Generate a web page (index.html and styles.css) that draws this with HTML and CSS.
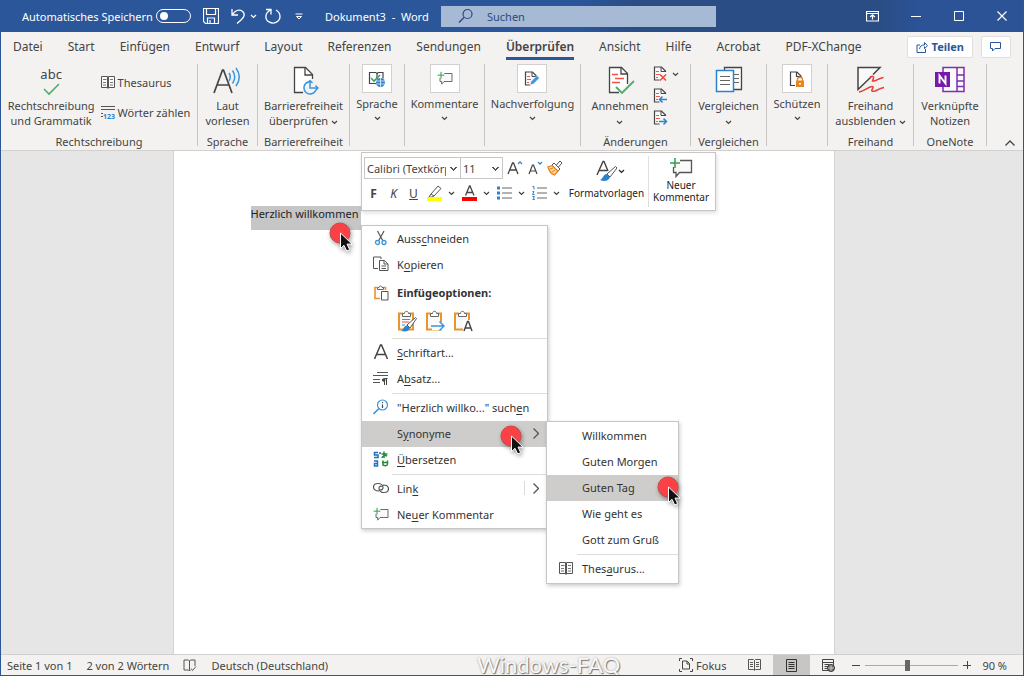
FILE: index.html
```html
<!DOCTYPE html>
<html lang="de">
<head>
<meta charset="utf-8">
<title>Dokument3 - Word</title>
<link rel="stylesheet" href="styles.css">
</head>
<body>
<svg class="defs" aria-hidden="true">
  <symbol id="chev" viewBox="0 0 7 5"><path d="M1 1l2.5 2.5L6 1" fill="none" stroke="currentColor" stroke-width="1.2"/></symbol>
  <symbol id="book" viewBox="0 0 16 16"><path d="M7.500 2.500h-6v11h6zM8.500 2.500h6v11h-6zM7.500 13l.5 1.500.5-1.500" fill="#fafafa" stroke="#555"/><path d="M3 8.500h3M3 11h3M10 5.500h3M10 8.500h3M10 11h3" stroke="#777"/><path d="M3 5.500h3.500" stroke="#e8413c"/></symbol>
  <symbol id="comment" viewBox="0 0 24 22"><path d="M11 3.500h11.500v12h-12l-3.500 4v-4H4.500V10" fill="#fafafa" stroke="#555" stroke-width="1.300"/><path d="M6 1v10M1 6h10" stroke="#2f9e50" stroke-width="1.500"/></symbol>
  <symbol id="pages" viewBox="0 0 14 16"><path d="M12.500 6V5L8.500 1H1.500v13h5" fill="#fafafa" stroke="#444" stroke-width="1.200"/><path d="M8 1v4.500h4.500" fill="none" stroke="#444"/><path d="M3 5.500h3M3 8.500h4M3 11.500h2" stroke="#ee5a4b"/></symbol>
  <symbol id="clip" viewBox="0 0 20 22"><path d="M6 3.500H2v16h14v-16h-4" fill="#fafafa" stroke="#e8952f" stroke-width="2"/><path d="M5.500 6.500v-3h2c0-3 4-3 4 0h2v3z" fill="#fff" stroke="#666"/></symbol>
  <symbol id="pointer" viewBox="0 0 34 34"><circle cx="12" cy="12" r="10" fill="#fb4145" stroke="#c34a4c" stroke-width="1"/><path d="M12.500 12v15.500l3.500-3.200 2.700 5.700 3-1.400-2.700-5.500h5z" fill="#111" stroke="#fff" stroke-width="1"/></symbol>
</svg>

<header class="titlebar">
  <div class="quick">
    <label class="autosave">Automatisches Speichern <input type="checkbox" role="switch" class="toggle"></label>
    <button class="tb" aria-label="Speichern"><svg width="16" height="16" viewBox="0 0 16 16"><path d="M.5.500h15v15H2.500l-2-2zM3.500.500v6h9v-6M4.500 15.500v-5.500h7v5.500M7 12v3" fill="none" stroke="#fff" stroke-width="1.200"/></svg></button>
    <button class="tb undo" aria-label="Rückgängig"><svg width="15" height="16" viewBox="0 0 15 16"><path d="M1 1v6h6M1.500 6.500C4 2.500 8 1 11 3c3.500 2.500 2.500 6-1 9l-4 3.500" fill="none" stroke="#fff" stroke-width="1.300"/></svg><svg class="chev"><use href="#chev"/></svg></button>
    <button class="tb redo" aria-label="Wiederholen"><svg width="16" height="16" viewBox="0 0 16 16"><path d="M1 1.500h5v5M5.500 2C-.500 5-.500 12 4.500 14.200 9 16.500 15 13.500 15 8.500c0-3-1.500-5-4-6.500" fill="none" stroke="#fff" stroke-width="1.300"/></svg></button>
    <button class="tb" aria-label="Symbolleiste anpassen"><svg width="8" height="7" viewBox="0 0 8 7"><path d="M.500 1h7M1.500 3.500L4 6l2.500-2.500z" fill="none" stroke="#fff"/></svg></button>
  </div>
  <div class="doctitle">Dokument3&nbsp; -&nbsp; Word</div>
  <label class="search"><svg width="16" height="16" viewBox="0 0 16 16"><circle cx="9.500" cy="6" r="4.500" fill="none" stroke="#2b4a80" stroke-width="1.200"/><path d="M6 9.500L1 14.500" stroke="#2b4a80" stroke-width="1.400"/></svg><input type="search" placeholder="Suchen" aria-label="Suchen"></label>
  <div class="winbtns">
    <button aria-label="Menüband-Anzeigeoptionen"><svg width="13" height="11" viewBox="0 0 13 11"><path d="M.5.500h12v9.500H.500zM.5 2.500h12M6.500 8.500V4M4 6l2.500-2.200L9 6" fill="none" stroke="#fff" stroke-width="1.200"/></svg></button>
    <button aria-label="Minimieren"><svg width="10" height="10" viewBox="0 0 10 10"><path d="M0 5.500h10" stroke="#fff"/></svg></button>
    <button aria-label="Maximieren"><svg width="10" height="10" viewBox="0 0 10 10"><path d="M.5.500h9v9h-9z" fill="none" stroke="#fff"/></svg></button>
    <button aria-label="Schließen"><svg width="10" height="10" viewBox="0 0 10 10"><path d="M.5.500l9 9M9.500.500l-9 9" stroke="#fff" stroke-width="1.200"/></svg></button>
  </div>
</header>

<nav class="tabs">
  <a href="#">Datei</a><a href="#">Start</a><a href="#">Einfügen</a><a href="#">Entwurf</a><a href="#">Layout</a><a href="#">Referenzen</a><a href="#">Sendungen</a><a href="#" class="active">Überprüfen</a><a href="#">Ansicht</a><a href="#">Hilfe</a><a href="#">Acrobat</a><a href="#">PDF-XChange</a>
  <div class="share">
    <button class="teilen"><svg width="12" height="12" viewBox="0 0 12 12"><path d="M4 4H1v7.500h8.500V8M3.500 8c.5-3 2-4 5-4V1.500l3 3.200-3 3V5.500" fill="none" stroke="#2b579a"/></svg>Teilen</button>
    <button aria-label="Kommentare"><svg width="12" height="10" viewBox="0 0 12 10"><path d="M.5.500h10v6H5l-2.500 2.500V6.500h-2z" fill="none" stroke="#2b579a"/></svg></button>
  </div>
</nav>

<section class="ribbon">
  <div class="group">
    <div class="items">
      <button class="big"><span class="spell"><span class="abc">abc</span><svg width="17" height="13" viewBox="0 0 17 13"><path d="M1 6l5 5L16 1" fill="none" stroke="#4caf6a" stroke-width="1.600"/></svg></span><span>Rechtschreibung<br>und Grammatik</span></button>
      <div class="stack">
        <button><svg width="16" height="16"><use href="#book"/></svg>Thesaurus</button>
        <button><svg width="16" height="16" viewBox="0 0 16 16"><path d="M1 2.500h14M1 5.500h14M1 9.500h2M1 12.500h2" stroke="#555"/><text x="3" y="15" class="num">123</text></svg>Wörter zählen</button>
      </div>
    </div>
    <h2>Rechtschreibung</h2>
  </div>
  <div class="group">
    <div class="items"><button class="big"><svg class="ico" viewBox="0 0 30 30"><path d="M2 27L10.500 4h1L20 27M5 19h12" fill="none" stroke="#444" stroke-width="1.700"/><path d="M17 7q2.500 4 0 8M20.500 4.500q4.500 6.500 0 13M24 2q6.500 9 0 18" fill="none" stroke="#3a96dd" stroke-width="1.500"/></svg><span>Laut<br>vorlesen</span></button></div>
    <h2>Sprache</h2>
  </div>
  <div class="group">
    <div class="items"><button class="big"><svg class="ico" viewBox="0 0 30 30"><path d="M14 26.500H5.500v-25h11l7 7V13" fill="#fff" stroke="#444" stroke-width="1.300"/><path d="M16 2v7h7" fill="none" stroke="#444" stroke-width="1.300"/><path d="M19 16a6.200 6.200 0 1 0 8 8M21 15v7h8M26.500 19.500L29 22l-2.500 2.500M18.500 17l2.500-2.500 2.500 2.500" fill="none" stroke="#3a96dd" stroke-width="1.500"/></svg><span>Barrierefreiheit<br>überprüfen <svg class="chev"><use href="#chev"/></svg></span></button></div>
    <h2>Barrierefreiheit</h2>
  </div>
  <div class="group">
    <button class="boxed"><span class="box"><svg width="18" height="18" viewBox="0 0 18 18"><path d="M8 2.500H1.500v11H8l1 1M9 4l1-1.500h5v6M9 4v5M9 4L8 2.500" fill="none" stroke="#444" stroke-width="1.200"/><path d="M3 8l3 3 6-6" fill="none" stroke="#3fa05b" stroke-width="1.600"/><circle cx="12.500" cy="12.500" r="4.500" fill="#2b83d0"/><path d="M8 11h9M8 14h9M12.500 8v9" stroke="#fff" stroke-width=".7"/></svg></span>Sprache<svg class="chev"><use href="#chev"/></svg></button>
  </div>
  <div class="group">
    <button class="boxed"><span class="box"><svg width="16" height="15"><use href="#comment"/></svg></span>Kommentare<svg class="chev"><use href="#chev"/></svg></button>
  </div>
  <div class="group">
    <button class="boxed"><span class="box"><svg width="16" height="16" viewBox="0 0 16 16"><use href="#pages" width="14" height="16"/><path d="M6 14l1-3.500 6-6 2.500 2.500-6 6z" fill="#3a96dd" stroke="#fff" stroke-width=".6"/></svg></span>Nachverfolgung<svg class="chev"><use href="#chev"/></svg></button>
  </div>
  <div class="group">
    <div class="items">
      <button class="big"><svg class="ico" viewBox="0 0 30 30"><path d="M14 26.500H4.500v-25h12l6 6V18" fill="#fff" stroke="#444" stroke-width="1.300"/><path d="M16 2v6h6" fill="none" stroke="#444" stroke-width="1.300"/><path d="M7 8.500h6M10 12.500h9M7 16.500h8" stroke="#f2523f" stroke-width="1.300"/><path d="M11 21l6 6 12-12" fill="none" stroke="#4caf6a" stroke-width="1.800"/></svg><span>Annehmen<br><svg class="chev"><use href="#chev"/></svg></span></button>
      <div class="mini">
        <button aria-label="Ablehnen"><svg width="15" height="16" viewBox="0 0 15 16"><use href="#pages" width="14" height="16"/><path d="M7 8.500l6 6M13 8.500l-6 6" stroke="#ee4a3b" stroke-width="1.500"/></svg><svg class="chev"><use href="#chev"/></svg></button>
        <button aria-label="Vorherige"><svg width="15" height="16" viewBox="0 0 15 16"><use href="#pages" width="14" height="16"/><path d="M14 11.500H6.500M9.500 8.500l-3 3 3 3" fill="none" stroke="#2b83d0" stroke-width="1.500"/></svg></button>
        <button aria-label="Nächste"><svg width="15" height="16" viewBox="0 0 15 16"><use href="#pages" width="14" height="16"/><path d="M6 11.500h7.500M10.500 8.500l3 3-3 3" fill="none" stroke="#2b83d0" stroke-width="1.500"/></svg></button>
      </div>
    </div>
    <h2>Änderungen</h2>
  </div>
  <div class="group">
    <div class="items"><button class="big"><svg class="ico" viewBox="0 0 30 30"><path d="M10.500 4V1.500h17v22H20" fill="#fafafa" stroke="#444" stroke-width="1.300"/><path d="M20 8.500h5M20 12.500h5M20 16.500h5" stroke="#666"/><path d="M2.500 4.500h17v21h-17z" fill="#fff" stroke="#2b83d0" stroke-width="1.500"/><path d="M6 10.500h10M6 14.500h10M6 18.500h10" stroke="#666"/></svg><span>Vergleichen<br><svg class="chev"><use href="#chev"/></svg></span></button></div>
    <h2>Vergleichen</h2>
  </div>
  <div class="group">
    <button class="boxed"><span class="box"><svg width="16" height="16" viewBox="0 0 16 16"><path d="M6 14.500H1.500V1H8l4 4v2M7.500 1v4.500H12" fill="none" stroke="#444" stroke-width="1.200"/><path d="M8.500 10V8.500c0-3 5-3 5 0V10" fill="none" stroke="#e8851c" stroke-width="1.300"/><path d="M7 9.500h8V16H7z" fill="#e8851c"/><path d="M10 12h2v1.500h-2z" fill="#fff"/></svg></span>Schützen<svg class="chev"><use href="#chev"/></svg></button>
  </div>
  <div class="group">
    <div class="items"><button class="big"><svg class="ico" viewBox="0 0 30 30"><path d="M16 11L3 23.500v-22h22l-7 7" fill="#fafafa" stroke="#444" stroke-width="1.500"/><path d="M15 11c2-1 4-1 3.500 1l-1 3c3 1 6-3 11-3.500M4 26c5-1 9-5 13-5.500 2 0 1 1.500 0 3-1 2 1 2 3 1.500 3-1 5-3 9-3.500" fill="none" stroke="#ee3b33" stroke-width="1.500"/></svg><span>Freihand<br>ausblenden <svg class="chev"><use href="#chev"/></svg></span></button></div>
    <h2>Freihand</h2>
  </div>
  <div class="group">
    <div class="items"><button class="big"><svg class="ico" viewBox="0 0 30 30"><path d="M8 1.500h21v24H8zM22 1.500v24M22 9h7M22 15h7M22 20.500h7" fill="#fafafa" stroke="#7c2fb0" stroke-width="1.500"/><path d="M0 6h15v15H0z" fill="#7719aa"/><path d="M4.500 17.500v-8l6 8v-8" fill="none" stroke="#fff" stroke-width="1.900"/></svg><span>Verknüpfte<br>Notizen</span></button></div>
    <h2>OneNote</h2>
  </div>
  <div class="group collapse"><button aria-label="Menüband reduzieren"><svg width="10" height="6" viewBox="0 0 10 6"><path d="M.5 5.500L5 1l4.500 4.500" fill="none" stroke="#444" stroke-width="1.300"/></svg></button></div>
</section>

<main class="canvas">
  <article class="page"><p><span class="sel">Herzlich willkommen</span></p></article>

  <div class="minibar">
    <div class="fmt">
      <div class="row">
        <select class="font" aria-label="Schriftart"><option>Calibri (Textkörper)</option></select><select class="size" aria-label="Schriftgrad"><option>11</option></select>
        <button aria-label="Schrift vergrößern"><svg width="16" height="16" viewBox="0 0 16 16"><path d="M1 14L5.500 3h1L11 14M3 10h6" fill="none" stroke="#444" stroke-width="1.300"/><path d="M11 4l2-2.200L15 4" fill="none" stroke="#2b83d0" stroke-width="1.200"/></svg></button>
        <button aria-label="Schrift verkleinern"><svg width="16" height="16" viewBox="0 0 16 16"><path d="M2 14l3.500-9h1L10 14M3.500 11h5" fill="none" stroke="#444" stroke-width="1.200"/><path d="M11 2l2 2.200L15 2" fill="none" stroke="#2b83d0" stroke-width="1.200"/></svg></button>
        <button aria-label="Format übertragen"><svg width="16" height="16" viewBox="0 0 16 16"><path d="M9.500 5L13 1l2 2-3.500 4" fill="#fff" stroke="#555"/><path d="M7 3l6 6-2 2-6-6z" fill="#fff" stroke="#555"/><path d="M5 5.500L1 7c1 4 3.500 7 6.500 8l3.500-4z" fill="#fbd3a0" stroke="#e8851c" stroke-width="1.300"/><path d="M3 9l3-1M5 12l3-2" stroke="#e8851c"/></svg></button>
      </div>
      <div class="row two">
        <button class="ch"><b>F</b></button><button class="ch"><i>K</i></button><button class="ch"><u>U</u></button>
        <button aria-label="Texthervorhebung"><svg width="16" height="16" viewBox="0 0 16 16"><path d="M4 9l7-8 3 2.500L7 11zM4 9l-2 3h3l2-1" fill="#fff" stroke="#555"/><path d="M0 12h15v4H0z" fill="#ff0"/></svg><svg class="chev"><use href="#chev"/></svg></button>
        <button aria-label="Schriftfarbe"><svg width="16" height="16" viewBox="0 0 16 16"><path d="M3.500 10.500L7.500 1h.5l4 9.500M5 7.500h5.500" fill="none" stroke="#444" stroke-width="1.300"/><path d="M0 12h15v4H0z" fill="#f00"/></svg><svg class="chev"><use href="#chev"/></svg></button>
        <button aria-label="Aufzählung"><svg width="16" height="16" viewBox="0 0 16 16"><path d="M5 3h10M5 8h10M5 13h10" stroke="#666"/><path d="M0 1.500h3v3H0zM0 6.500h3v3H0zM0 11.500h3v3H0z" fill="#2b83d0"/></svg><svg class="chev"><use href="#chev"/></svg></button>
        <button aria-label="Nummerierung"><svg width="16" height="16" viewBox="0 0 16 16"><path d="M5 3h10M5 8h10M5 13h10" stroke="#666"/><path d="M.5 1.500H2v3M.5 6.500H2l-1.500 3h2M.5 11.500h2l-1 1.500 1 1.500h-2" fill="none" stroke="#2b83d0"/></svg><svg class="chev"><use href="#chev"/></svg></button>
      </div>
    </div>
    <button class="styles"><span><svg width="22" height="22" viewBox="0 0 22 22"><path d="M1 15L7 1.500h1L12 11M3.500 10.500h8" fill="none" stroke="#444" stroke-width="1.400"/><path d="M11 14l8.500-7.500 1.500 1.500-7 9z" fill="#fff" stroke="#555"/><path d="M4 20c3-1 3-6 7-6l3 3c-1 4-6 5-10 3z" fill="#2b83d0"/></svg><svg class="chev"><use href="#chev"/></svg></span>Formatvorlagen</button>
    <button class="newc"><svg width="24" height="22"><use href="#comment"/></svg>Neuer<br>Kommentar</button>
  </div>

  <div class="menu context" role="menu">
    <button role="menuitem"><svg width="16" height="16" viewBox="0 0 16 16"><path d="M4.500 1l5.500 10M11 1L5.500 11" stroke="#555" stroke-width="1.200"/><circle cx="4.500" cy="12.500" r="2" fill="none" stroke="#3a96dd" stroke-width="1.300"/><circle cx="11" cy="12.500" r="2" fill="none" stroke="#3a96dd" stroke-width="1.300"/></svg><span>Auss<u>c</u>hneiden</span></button>
    <button role="menuitem"><svg width="16" height="16" viewBox="0 0 16 16"><path d="M5 12.500H.500V1H8v2" fill="none" stroke="#555"/><path d="M6.500 4.500h5l3.500 3.500v6.500H6.500zM11 4.500V8h4M8.500 10h4.500M8.500 12.500h4.500" fill="#fff" stroke="#555"/></svg><span>K<u>o</u>pieren</span></button>
    <div class="head"><svg width="16" height="16" viewBox="0 0 16 16"><path d="M4 2.500H2v11h5M10 2.500h2.500V5" fill="none" stroke="#e8952f" stroke-width="1.600"/><path d="M4.500 4.500v-2h1.500c0-2 3-2 3 0h1.500v2z" fill="#fff" stroke="#666"/><path d="M8.500 6.500h6.500v8.500H8.500z" fill="#fff" stroke="#555"/></svg><span>Einfügeoptionen:</span></div>
    <div class="paste">
      <button aria-label="Ursprüngliche Formatierung beibehalten"><svg width="20" height="22" viewBox="0 0 20 22"><use href="#clip" width="20" height="22"/><path d="M5 9.500h8M5 15h3" stroke="#3a96dd"/><path d="M5 12h7" stroke="#f2523f"/><path d="M10 15l8.500-7.500 1 1L13 18z" fill="#fff" stroke="#555"/><path d="M4 21c3-1 2-5 6-5.500l3 2.500c-1 3.500-5 4-9 3z" fill="#2b83d0"/></svg></button>
      <button aria-label="Formatierung zusammenführen"><svg width="20" height="22" viewBox="0 0 20 22"><use href="#clip" width="20" height="22"/><path d="M7 12h12v8H7z" fill="#fff"/><path d="M6 16h13M14.500 11.500L19 16l-4.500 4.500" fill="none" stroke="#3a96dd" stroke-width="1.500"/></svg></button>
      <button aria-label="Nur den Text übernehmen"><svg width="20" height="22" viewBox="0 0 20 22"><use href="#clip" width="20" height="22"/><path d="M10 10h10v12H10z" fill="#fff"/><path d="M11 21l3.500-9.500h1L19 21M12 18h6" fill="none" stroke="#444" stroke-width="1.400"/></svg></button>
    </div>
    <hr>
    <button role="menuitem"><svg width="16" height="16" viewBox="0 0 16 16"><path d="M1.500 15L7.500 1h1l6 14M4 10.500h8" fill="none" stroke="#444" stroke-width="1.500"/></svg><span><u>S</u>chriftart...</span></button>
    <button role="menuitem"><svg width="16" height="16" viewBox="0 0 16 16"><path d="M4 2.500h11M0 5.500h15M0 9.500h7M0 12.500h7" stroke="#555" stroke-width="1.200"/><path d="M11.500 15V8.500h3M13.500 15V8.500" stroke="#444" fill="none"/><circle cx="10.700" cy="10" r="1.800" fill="#444"/></svg><span>A<u>b</u>satz...</span></button>
    <hr>
    <button role="menuitem"><svg width="16" height="16" viewBox="0 0 16 16"><circle cx="9.500" cy="6" r="5" fill="none" stroke="#3a96dd" stroke-width="1.200"/><path d="M6 9.500L.500 15" stroke="#3a96dd" stroke-width="1.600"/><path d="M9.500 5.500v3.500M9.500 3v1.300" stroke="#444" stroke-width="1.200"/></svg><span>"Herzlich willko..." such<u>e</u>n</span></button>
    <button role="menuitem" class="hot"><i class="noico"></i><span>S<u>y</u>nonyme</span><svg class="arrow" viewBox="0 0 6 11"><path d="M.5.500l5 5-5 5" fill="none" stroke="#555" stroke-width="1.300"/></svg></button>
    <button role="menuitem"><svg width="16" height="16" viewBox="0 0 16 16"><path d="M5 1.500H1.500V4H5v2.500H1M7 1v2" fill="none" stroke="#2372ba" stroke-width="1.600"/><path d="M1 10h3.500v5H1.500v-2.500h3" fill="none" stroke="#2372ba" stroke-width="1.500"/><path d="M8.500 3h6M11 .500v6.500M14 5c-2-1-5 0-5 2M9 11.500h5.500M10 9.500V14c2 1 4.500 1 4.500-1V9.500" fill="none" stroke="#228b3b" stroke-width="1.500"/></svg><span><u>Ü</u>bersetzen</span></button>
    <hr>
    <button role="menuitem"><svg width="16" height="16" viewBox="0 0 16 16"><path d="M6 11C3 11 .500 9.500.500 7S2.500 3.500 5 3.500 10 5 10 7.500 8 10 7 9.500M10 5c3 0 5.500 1.500 5.500 4s-2 3.500-4.500 3.500S6 11 6 8.500 8 6 9 6.500" fill="none" stroke="#555" stroke-width="1.200"/></svg><span>Lin<u>k</u></span><i class="split"></i><svg class="arrow" viewBox="0 0 6 11"><path d="M.5.500l5 5-5 5" fill="none" stroke="#555" stroke-width="1.300"/></svg></button>
    <button role="menuitem"><svg width="16" height="15"><use href="#comment"/></svg><span>Ne<u>u</u>er Kommentar</span></button>
  </div>

  <div class="menu sub" role="menu">
    <button role="menuitem"><i class="noico"></i><span>Willkommen</span></button>
    <button role="menuitem"><i class="noico"></i><span>Guten Morgen</span></button>
    <button role="menuitem" class="hot"><i class="noico"></i><span>Guten Tag</span></button>
    <button role="menuitem"><i class="noico"></i><span>Wie geht es</span></button>
    <button role="menuitem"><i class="noico"></i><span>Gott zum Gruß</span></button>
    <hr>
    <button role="menuitem"><svg width="16" height="16"><use href="#book"/></svg><span>Thes<u>a</u>urus...</span></button>
  </div>
  <svg class="pointer p1"><use href="#pointer"/></svg>
  <svg class="pointer p2"><use href="#pointer"/></svg>
  <svg class="pointer p3"><use href="#pointer"/></svg>
</main>

<footer class="status">
  <span>Seite 1 von 1</span><span>2 von 2 Wörtern</span>
  <svg width="14" height="13" viewBox="0 0 14 13"><path d="M6.500 2L5.500 1H1v10h4.500l1 1 1-1M6.500 2v9.500M6.500 2l1-1H12v6M8 9.500l1.500 2L13 7.500" fill="none" stroke="#555"/></svg>
  <span>Deutsch (Deutschland)</span>
  <div class="views">
    <button class="fokus"><svg width="14" height="14" viewBox="0 0 14 14"><path d="M3 .5H.500V3M11 .5h2.500V3M3 13.500H.500V11M11 13.500h2.500V11M3.500 3H8l2.500 2.500V11h-7zM8 3v3h2.500" fill="none" stroke="#444"/></svg>Fokus</button>
    <button class="view" aria-label="Lesemodus"><svg width="13" height="12" viewBox="0 0 13 12"><path d="M6.500 1.500l-1-1h-5v10h5l1 1 1-1h5V.5h-5zM6.500 1.500V11M2 3.500h3M2 5.500h3M2 7.500h3M8 3.500h3M8 5.500h3M8 7.500h3" fill="none" stroke="#555"/></svg></button>
    <button class="view on" aria-label="Seitenlayout"><svg width="11" height="13" viewBox="0 0 11 13"><path d="M.5.500h10v12H.500zM2.500 3.500h6M2.500 5.500h6M2.500 7.500h6M2.500 9.500h6" fill="none" stroke="#333"/></svg></button>
    <button class="view" aria-label="Weblayout"><svg width="13" height="13" viewBox="0 0 13 13"><path d="M6 11.500H.500V.5h11V6M.5 3.500h11M2.500 5.500h5M2.500 7.500h4M2.500 9.500h3" fill="none" stroke="#444"/><circle cx="9" cy="9" r="3.500" fill="#777" stroke="#333"/><path d="M9 6v6M6 9h6" stroke="#ddd" stroke-width=".7"/></svg></button>
    <button class="zoomb" aria-label="Verkleinern"><svg width="8" height="8" viewBox="0 0 8 8"><path d="M0 4.500h8" stroke="#444"/></svg></button>
    <input type="range" min="0" max="100" value="45" aria-label="Zoom">
    <button class="zoomb" aria-label="Vergrößern"><svg width="8" height="8" viewBox="0 0 8 8"><path d="M0 4.500h8M4.500 0v8" stroke="#444"/></svg></button>
    <span class="pct">90 %</span>
  </div>
  <div class="mark">Windows-FAQ</div>
</footer>
</body>
</html>
```
FILE: styles.css
```css
* { box-sizing: border-box; }
body {
  margin: 0;
  height: 100vh;
  display: flex;
  flex-direction: column;
  position: relative;
  overflow: hidden;
  border: 1px solid #2b579a;
  border-top: 0;
  font-family: "Noto Sans", sans-serif;
  font-size: 11px;
  line-height: 15px;
  color: #444;
  background: #f3f2f1;
}
button, input, select { font: inherit; color: inherit; margin: 0; }
button { border: 0; padding: 0; background: none; display: flex; align-items: center; }
svg { display: block; flex: none; }
.defs { position: absolute; width: 0; height: 0; }
.chev { width: 7px; height: 5px; display: inline-block; vertical-align: middle; }

.titlebar {
  height: 32px;
  flex: none;
  display: flex;
  align-items: center;
  color: #fff;
  background: linear-gradient(90deg, #2b579a 56%, #2a4d86 62%, #2a4d86 86%, #2b5396 90%);
}
.quick { display: flex; align-items: center; padding-left: 21px; gap: 12px; width: 324px; flex: none; }
.autosave { display: flex; align-items: center; gap: 3px; white-space: nowrap; }
.toggle { appearance: none; width: 35px; height: 14px; border: 1px solid #fff; border-radius: 7px; padding: 2px 3px; }
.toggle::before { content: ""; display: block; width: 8px; height: 8px; border-radius: 50%; background: #fff; }
.undo { gap: 4px; }
.redo { margin: 0 2px 0 -4px; }
.doctitle { width: 116px; flex: none; white-space: nowrap; }
.search { display: flex; align-items: center; gap: 13px; width: 275px; height: 21px; padding-left: 17px; background: #a6bad5; color: #2b4a80; }
.search input { border: 0; background: none; padding: 0; width: 180px; outline: 0; }
.search input::placeholder { color: #2b4a80; opacity: 1; }
.winbtns { display: flex; margin-left: auto; }
.winbtns button { width: 43px; height: 32px; justify-content: center; }

.tabs { flex: none; height: 29px; display: flex; align-items: center; gap: 25px; padding: 0 12px; font-size: 12px; }
.tabs a { color: #444; text-decoration: none; line-height: 26px; white-space: nowrap; }
.tabs a.active { font-weight: 600; border-bottom: 3px solid #2b579a; line-height: 20px; margin-top: 3px; }
.share { margin-left: auto; display: flex; gap: 8px; }
.share button { height: 22px; padding: 0 8px; gap: 4px; background: #fff; border: 1px solid #e1dfdd; border-radius: 2px; color: #2b579a; font-size: 11px; font-weight: 700; }

.ribbon {
  flex: none;
  height: 90px;
  padding-top: 3px;
  border-bottom: 1px solid #d2d0ce;
  display: grid;
  grid-template-columns: 197fr 60fr 92fr 55fr 80fr 96fr 110fr 76fr 61fr 86fr 73fr 36fr;
}
.group { display: flex; flex-direction: column; align-items: center; min-width: 0; white-space: nowrap; border-right: 1px solid #c8c6c4; height: 82px; }
.group h2 { margin: auto 0 -3px; font-size: 11px; font-weight: 400; line-height: 15px; }
.items { display: flex; }
.big { flex-direction: column; gap: 2px; padding-top: 2px; text-align: center; line-height: 15px; }
.ico { width: 30px; height: 30px; }
.spell { height: 30px; display: flex; flex-direction: column; align-items: center; }
.abc { font-size: 13px; line-height: 17px; }
.num { font-size: 7px; font-weight: 700; fill: #2b83d0; }
.stack { display: flex; flex-direction: column; gap: 14px; padding: 10px 0 0 5px; }
.stack button { gap: 2px; height: 16px; }
.boxed { flex-direction: column; gap: 3px; }
.boxed .chev { margin-top: 2px; }
.box { width: 30px; height: 29px; background: #fff; border: 1px solid #d2d0ce; display: flex; align-items: center; justify-content: center; }
.mini { display: flex; flex-direction: column; gap: 6px; padding: 2px 0 0 5px; }
.mini button { gap: 4px; }
.collapse { border: 0; }
.collapse button { margin: auto 0 0 10px; }

.canvas { flex: 1; position: relative; background: #e6e6e6; padding-right: 17px; display: flex; justify-content: center; }
.page { width: 662px; background: #fff; border: solid #d2d2d2; border-width: 0 1px; padding: 51px 77px; color: #222; }
.page p { margin: 0; line-height: 24px; }
.sel { display: inline-block; width: 110px; height: 24px; line-height: 16px; background: #c6c6c6; white-space: nowrap; }

.minibar { position: absolute; left: 360px; top: 1px; width: 355px; height: 59px; display: flex; background: #fff; border: 1px solid #c8c6c4; box-shadow: 1px 2px 4px #0002; padding: 3px 2px; }
.fmt { width: 201px; }
.row { display: flex; align-items: center; gap: 4px; height: 24px; }
.row.two { gap: 7px; height: 26px; padding-left: 3px; }
.row.two button { gap: 5px; }
.row button.ch { width: 13px; justify-content: center; font-size: 12px; }
.row select { appearance: none; border: 1px solid #c8c6c4; height: 22px; padding: 0 14px 0 2px; border-radius: 0; outline: 0; background-color: #fff; background-image: linear-gradient(45deg, transparent 50%, #555 50%, #555 70%, transparent 70%), linear-gradient(-45deg, transparent 50%, #555 50%, #555 70%, transparent 70%); background-size: 4px 4px; background-position: right 6px top 9px, right 3px top 9px; background-repeat: no-repeat; }
.row .font { width: 97px; margin-right: -5px; text-overflow: clip; }
.row .size { width: 43px; }
.styles, .newc { flex-direction: column; font-size: 10px; line-height: 12px; color: #222; }
.styles { width: 84px; padding-top: 4px; gap: 5px; border-right: 1px solid #e1dfdd; }
.styles span { display: flex; align-items: center; padding-left: 8px; }
.newc { width: 64px; padding-top: 1px; }

.menu { position: absolute; background: #fff; border: 1px solid #c8c6c4; box-shadow: 1px 2px 4px #0003; color: #333; }
.menu > button, .head { display: flex; align-items: center; width: 100%; height: 26px; padding: 0 8px 2px 11px; gap: 8px; white-space: nowrap; }
.menu u { text-underline-offset: 2px; }
.menu hr { border: 0; border-top: 1px solid #dedcda; margin: 1px 0 1px 30px; }
.menu .hot { background: #cfcdcb; }
.noico { width: 16px; }
.menu .head { height: 29px; padding-bottom: 0; font-weight: 700; }
.paste { display: flex; gap: 8px; height: 30px; padding: 0 0 2px 35px; }
.arrow { width: 6px; height: 11px; margin-left: auto; }
.split { width: 1px; height: 14px; background: #dedcda; margin-left: auto; }
.split + .arrow { margin-left: 0; }
.context { left: 360px; top: 74px; width: 187px; }
.sub { left: 545px; top: 270px; width: 133px; padding: 1px 0; }
.pointer { position: absolute; width: 34px; height: 34px; filter: drop-shadow(1px 2px 2px #0006); }
.p1 { left: 327px; top: 70px; }
.p2 { left: 498px; top: 273px; }
.p3 { left: 655px; top: 324px; }

.status { position: relative; flex: none; height: 21px; border-top: 1px solid #d2d0ce; display: flex; align-items: center; padding-left: 6px; gap: 14px; white-space: nowrap; }
.views { margin-left: auto; display: flex; align-items: center; height: 20px; padding-right: 16px; }
.fokus { gap: 3px; margin-right: 10px; }
.view { width: 37px; height: 20px; justify-content: center; }
.view.on { background: #c8c6c4; }
.zoomb { margin: 0 5px; }
.views input { appearance: none; width: 93px; height: 1px; background: #aaa; }
.views input::-webkit-slider-thumb { appearance: none; width: 5px; height: 11px; background: #666; }
.pct { margin-left: 6px; }
.mark { position: absolute; left: 476px; top: -3px; font-family: Lato, sans-serif; font-size: 22px; line-height: 26px; color: #f8f8f8; text-shadow: 1px 1px 1px #777, 0 0 2px #aaa; }
```
